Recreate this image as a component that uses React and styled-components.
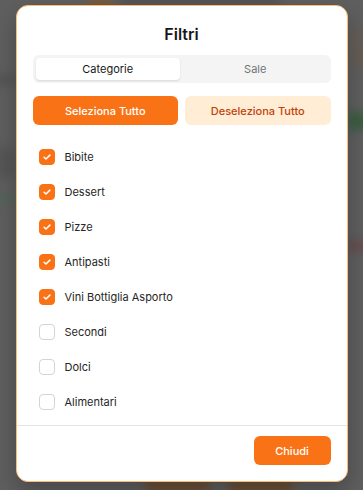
import React, { useState } from 'react';
import styled, { createGlobalStyle } from 'styled-components';

const GlobalStyle = createGlobalStyle`
  html, body {
    margin: 0;
    padding: 0;
    height: 100%;
    background: #5f5f5f;
  }
  #root {
    height: 100%;
  }
  * {
    box-sizing: border-box;
  }
`;

const Overlay = styled.div`
  position: relative;
  width: 363px;
  height: 490px;
  overflow: hidden;
  background: #5f5f5f;
  display: flex;
  justify-content: center;
  align-items: flex-start;
  padding-top: 5px;
  font-family: Inter, "Noto Sans", sans-serif;
`;

// blurred page content sitting under the dimmed overlay
const Blob = styled.div`
  position: absolute;
  filter: blur(4px);
  border-radius: 4px;
`;

const Dialog = styled.div`
  position: relative;
  width: 332px;
  height: 477px;
  background: #ffffff;
  border: 1px solid #fdba74;
  border-radius: 12px;
  display: flex;
  flex-direction: column;
  box-shadow: 0 10px 25px rgba(0, 0, 0, 0.25);
`;

const Body = styled.div`
  flex: 1;
  padding: 20px 16px 0;
  display: flex;
  flex-direction: column;
`;

const Title = styled.h2`
  margin: 0;
  text-align: center;
  font-size: 16px;
  font-weight: 600;
  color: #171717;
  line-height: 16px;
`;

const Tabs = styled.div`
  margin-top: 13px;
  height: 28px;
  background: #f4f4f5;
  border-radius: 6px;
  padding: 3px;
  display: grid;
  grid-template-columns: 1fr 1fr;
  gap: 3px;
`;

const Tab = styled.button`
  border: none;
  border-radius: 4px;
  background: ${p => (p.$active ? '#ffffff' : 'transparent')};
  box-shadow: ${p => (p.$active ? '0 1px 2px rgba(0,0,0,0.12)' : 'none')};
  color: ${p => (p.$active ? '#171717' : '#737373')};
  font-family: inherit;
  font-size: 11px;
  font-weight: 400;
  padding: 0;
  cursor: pointer;
`;

const Actions = styled.div`
  margin-top: 13px;
  display: grid;
  grid-template-columns: 1fr 1fr;
  gap: 7px;
`;

const ActionButton = styled.button`
  height: 29px;
  border: none;
  border-radius: 6px;
  background: ${p => (p.$primary ? '#f97316' : '#ffedd5')};
  color: ${p => (p.$primary ? '#ffffff' : '#c2410c')};
  font-family: inherit;
  font-size: 11px;
  font-weight: 500;
  cursor: pointer;
`;

const List = styled.ul`
  list-style: none;
  margin: 24px 0 0;
  padding: 0 0 0 6px;
  display: flex;
  flex-direction: column;
  gap: 19px;
`;

const Row = styled.li`
  display: flex;
  align-items: center;
  gap: 10px;
  height: 16px;
  cursor: pointer;
`;

const Box = styled.span`
  flex: none;
  width: 16px;
  height: 16px;
  border-radius: 4px;
  display: flex;
  align-items: center;
  justify-content: center;
  background: ${p => (p.$checked ? '#f97316' : '#ffffff')};
  border: 1px solid ${p => (p.$checked ? '#f97316' : '#d4d4d4')};
`;

const Label = styled.span`
  font-size: 11px;
  line-height: 16px;
  color: #262626;
`;

const Footer = styled.div`
  border-top: 1px solid #e5e5e5;
  height: 56px;
  padding: 10px 16px 0;
  display: flex;
  justify-content: flex-end;
  align-items: flex-start;
`;

const CloseButton = styled.button`
  width: 77px;
  height: 29px;
  border: none;
  border-radius: 6px;
  background: #f97316;
  color: #ffffff;
  font-family: inherit;
  font-size: 11px;
  font-weight: 500;
  cursor: pointer;
`;

const Check = () => (
  <svg width="10" height="10" viewBox="0 0 24 24" fill="none" stroke="#fff" strokeWidth="3.5" strokeLinecap="round" strokeLinejoin="round">
    <path d="M5 12.5l4.5 4.5L19 7.5" />
  </svg>
);

const initial = [
  { name: 'Bibite', checked: true },
  { name: 'Dessert', checked: true },
  { name: 'Pizze', checked: true },
  { name: 'Antipasti', checked: true },
  { name: 'Vini Bottiglia Asporto', checked: true },
  { name: 'Secondi', checked: false },
  { name: 'Dolci', checked: false },
  { name: 'Alimentari', checked: false },
];

export default function App() {
  const [tab, setTab] = useState('categorie');
  const [items, setItems] = useState(initial);

  const toggle = i =>
    setItems(items.map((it, idx) => (idx === i ? { ...it, checked: !it.checked } : it)));

  return (
    <>
      <GlobalStyle />
      <Overlay>
        <Blob style={{ left: 88, top: -8, width: 24, height: 14, background: '#7a5a3a' }} />
        <Blob style={{ left: 120, top: -4, width: 160, height: 8, background: '#505050' }} />
        <Blob style={{ left: 348, top: 28, width: 20, height: 40, background: '#665d57' }} />
        <Blob style={{ left: 348, top: 112, width: 20, height: 18, background: '#3b5e42' }} />
        <Blob style={{ left: 348, top: 240, width: 20, height: 12, background: '#664f4f' }} />
        <Blob style={{ left: -4, top: 75, width: 20, height: 10, background: '#545454' }} />
        <Blob style={{ left: -4, top: 148, width: 20, height: 30, background: '#565656' }} />
        <Blob style={{ left: -4, top: 194, width: 20, height: 10, background: '#55645a' }} />
        <Blob style={{ left: 145, top: 481, width: 65, height: 10, background: '#6e4a28' }} />
        <Blob style={{ left: 228, top: 481, width: 65, height: 10, background: '#6e4a28' }} />
        <Dialog>
          <Body>
            <Title>Filtri</Title>
            <Tabs>
              <Tab $active={tab === 'categorie'} onClick={() => setTab('categorie')}>Categorie</Tab>
              <Tab $active={tab === 'sale'} onClick={() => setTab('sale')}>Sale</Tab>
            </Tabs>
            <Actions>
              <ActionButton $primary onClick={() => setItems(items.map(it => ({ ...it, checked: true })))}>
                Seleziona Tutto
              </ActionButton>
              <ActionButton onClick={() => setItems(items.map(it => ({ ...it, checked: false })))}>
                Deseleziona Tutto
              </ActionButton>
            </Actions>
            <List>
              {items.map((it, i) => (
                <Row key={it.name} onClick={() => toggle(i)}>
                  <Box $checked={it.checked}>{it.checked && <Check />}</Box>
                  <Label>{it.name}</Label>
                </Row>
              ))}
            </List>
          </Body>
          <Footer>
            <CloseButton>Chiudi</CloseButton>
          </Footer>
        </Dialog>
      </Overlay>
    </>
  );
}
